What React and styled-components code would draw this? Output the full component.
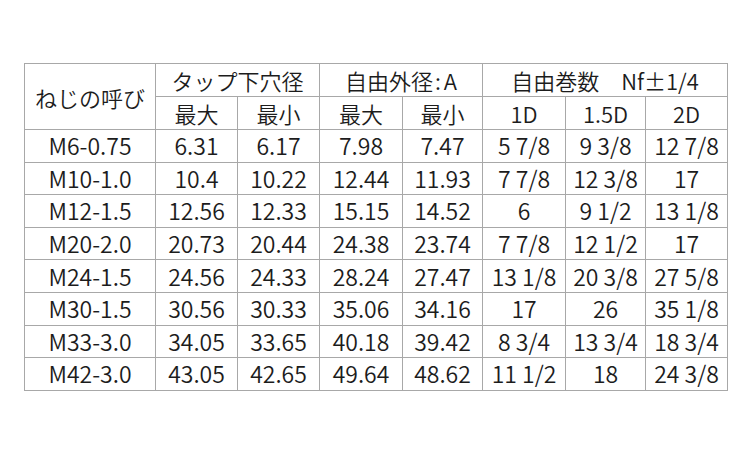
import React from "react";
import styled, { createGlobalStyle } from "styled-components";

const Global = createGlobalStyle`
  html, body { margin: 0; padding: 0; background: #ffffff; }
  body { font-family: "Noto Sans CJK JP", "Noto Sans", sans-serif; color: #1c1c1c; }
`;

const Page = styled.div`
  width: 750px;
  height: 450px;
  box-sizing: border-box;
  padding: 63px 0 0 24px;
  background: #fff;
`;

const Table = styled.table`
  border-collapse: collapse;
  table-layout: fixed;
  width: 703px;
  border: 1px solid #2e2e2e;
  font-size: 23px;
  font-weight: 350;
  line-height: 1;
`;

const Col = styled.col`
  width: ${(p) => p.$w}px;
`;

const Row = styled.tr`
  height: ${(p) => p.$h}px;
`;

const Head = styled.th`
  font-weight: 350;
  font-size: 22px;
  text-align: center;
  vertical-align: middle;
  padding: 0;
  border: 1px solid #a8a8a8;
  white-space: nowrap;
`;

const Cell = styled.td`
  text-align: center;
  vertical-align: middle;
  padding: 0;
  border: 1px solid #a8a8a8;
  white-space: nowrap;
`;

const Colon = styled.span`
  margin: 0 3px 0 2px;
`;

const widths = [131, 82, 82, 83, 80, 83, 80, 82];

const rows = [
  ["M6-0.75", "6.31", "6.17", "7.98", "7.47", "5 7/8", "9 3/8", "12 7/8"],
  ["M10-1.0", "10.4", "10.22", "12.44", "11.93", "7 7/8", "12 3/8", "17"],
  ["M12-1.5", "12.56", "12.33", "15.15", "14.52", "6", "9 1/2", "13 1/8"],
  ["M20-2.0", "20.73", "20.44", "24.38", "23.74", "7 7/8", "12 1/2", "17"],
  ["M24-1.5", "24.56", "24.33", "28.24", "27.47", "13 1/8", "20 3/8", "27 5/8"],
  ["M30-1.5", "30.56", "30.33", "35.06", "34.16", "17", "26", "35 1/8"],
  ["M33-3.0", "34.05", "33.65", "40.18", "39.42", "8 3/4", "13 3/4", "18 3/4"],
  ["M42-3.0", "43.05", "42.65", "49.64", "48.62", "11 1/2", "18", "24 3/8"],
];

export default function App() {
  return (
    <Page>
      <Global />
      <Table>
        <colgroup>
          {widths.map((w, i) => (
            <Col key={i} $w={w} />
          ))}
        </colgroup>
        <thead>
          <Row $h={33}>
            <Head rowSpan={2}>ねじの呼び</Head>
            <Head colSpan={2}>タップ下穴径</Head>
            <Head colSpan={2}>
              自由外径<Colon>:</Colon>A
            </Head>
            <Head colSpan={3}>自由巻数　Nf±1/4</Head>
          </Row>
          <Row $h={33}>
            <Head>最大</Head>
            <Head>最小</Head>
            <Head>最大</Head>
            <Head>最小</Head>
            <Head>1D</Head>
            <Head>1.5D</Head>
            <Head>2D</Head>
          </Row>
        </thead>
        <tbody>
          {rows.map((r, i) => (
            <Row key={i} $h={32.6}>
              {r.map((c, j) => (
                <Cell key={j}>{c}</Cell>
              ))}
            </Row>
          ))}
        </tbody>
      </Table>
    </Page>
  );
}
